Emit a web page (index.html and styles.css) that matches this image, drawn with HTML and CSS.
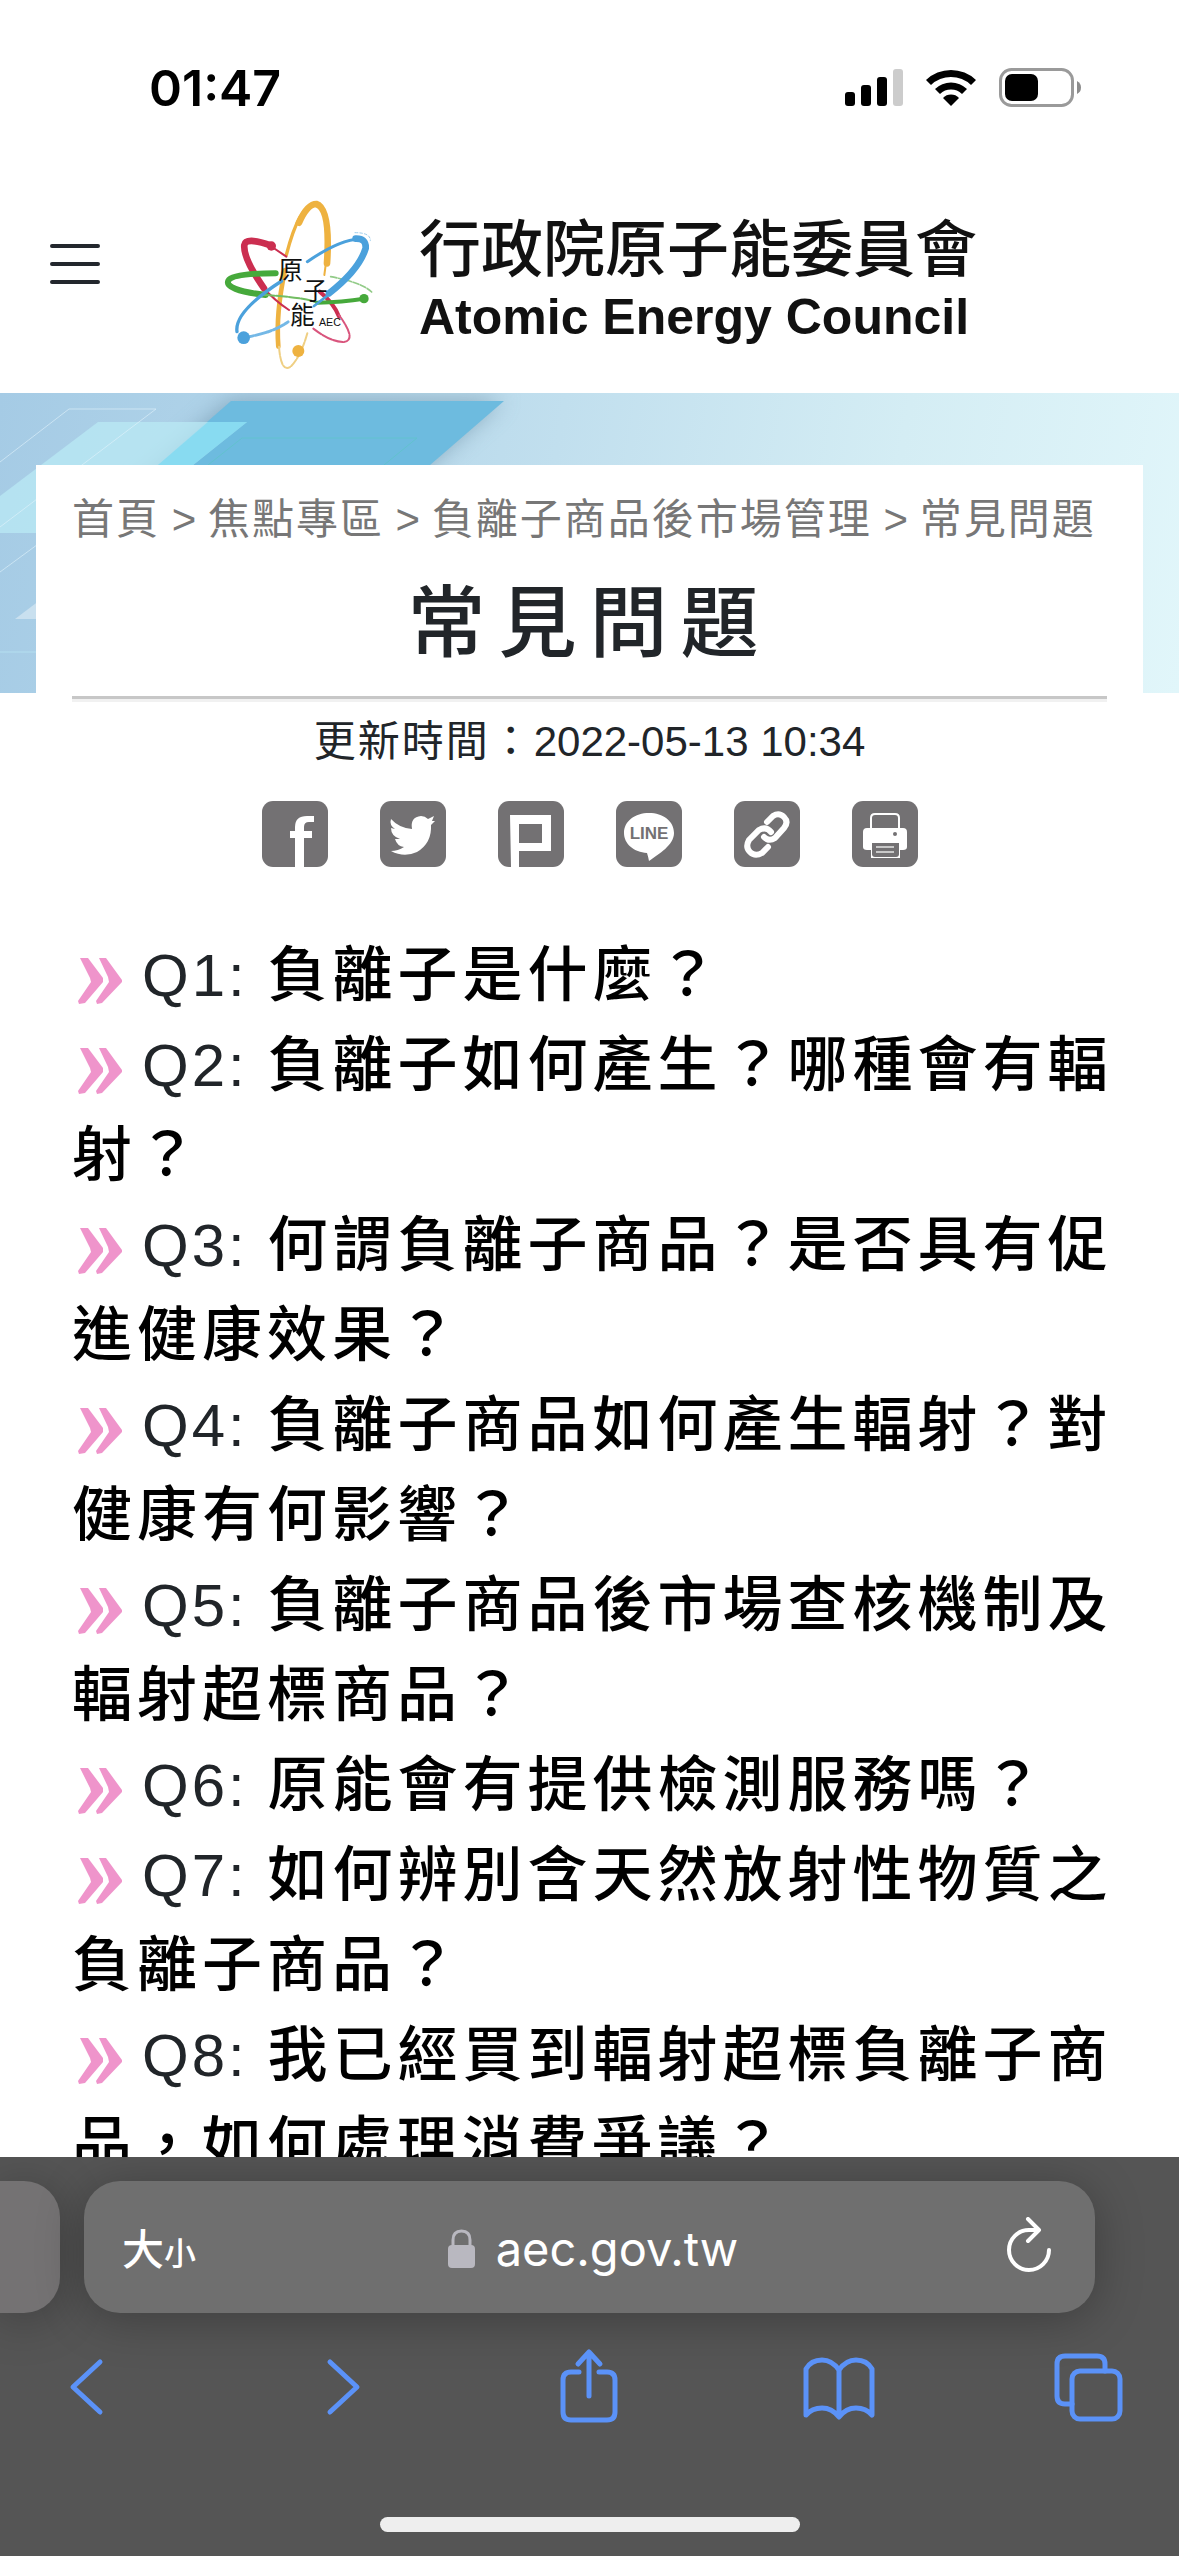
FILE: index.html
```html
<!DOCTYPE html>
<html lang="zh-Hant">
<head>
<meta charset="utf-8">
<meta name="viewport" content="width=device-width, initial-scale=1">
<title>常見問題 - 行政院原子能委員會</title>
<link rel="stylesheet" href="styles.css">
</head>
<body>
<div class="screen">
  <div class="status">
    <time class="status-time">01:47</time>
    <div class="status-icons">
      <svg width="58" height="40" viewBox="0 0 58 40" aria-hidden="true">
        <rect x="0" y="24" width="10" height="14" rx="3"/>
        <rect x="16" y="17" width="10" height="21" rx="3"/>
        <rect x="32" y="9" width="10" height="29" rx="3"/>
        <rect x="48" y="1" width="10" height="37" rx="3" fill="#ccc"/>
      </svg>
      <svg width="52" height="40" viewBox="0 0 52 40" aria-hidden="true">
        <path d="M1 12 A36 36 0 0 1 51 12 L46 17 A29 29 0 0 0 6 17 Z"/>
        <path d="M10 21 A23 23 0 0 1 42 21 L37 26 A16 16 0 0 0 15 26 Z"/>
        <path d="M18 30 A11 11 0 0 1 34 30 L26 38 Z"/>
      </svg>
      <svg width="84" height="40" viewBox="0 0 84 40" aria-hidden="true">
        <rect x="1.500" y="1.500" width="72" height="36" rx="11" fill="none" stroke="#9a9a9a" stroke-width="3"/>
        <rect x="6" y="6" width="33" height="27" rx="7"/>
        <path d="M78 13 Q82 15 82 19.500 Q82 24 78 26 Z" fill="#8c8c8c"/>
      </svg>
    </div>
  </div>

  <header class="site-header">
    <button class="menu" type="button" aria-label="選單">
      <svg width="50" height="42" viewBox="0 0 50 42"><path d="M2 3H48M2 21H48M2 39H48" stroke="#23272d" stroke-width="4" stroke-linecap="round"/></svg>
    </button>
    <a class="brand" href="#">
      <svg class="brand-mark" width="200" height="200" viewBox="0 0 600 600" aria-hidden="true">
        <g fill="none" stroke-linecap="round">
          <path d="M262 225 Q300 75 350 72" stroke="#eeb240" stroke-width="10"/>
          <path d="M300 128 Q325 72 352 72 Q395 85 384 250" stroke="#eeb240" stroke-width="20"/>
          <path d="M382 240 L376 285" stroke="#eeb240" stroke-width="6"/>
          <path d="M258 270 Q230 400 238 500" stroke="#eeb240" stroke-width="14"/>
          <path d="M240 500 Q246 580 275 560 Q305 530 325 460" stroke="#efcf83" stroke-width="6" stroke-dasharray="24 5"/>
          <path d="M215 196 Q140 170 136 195 Q132 235 195 325" stroke="#cb2e50" stroke-width="20"/>
          <path d="M185 315 Q230 365 270 390M215 198L262 230" stroke="#cb2e50" stroke-width="6"/>
          <path d="M362 335 Q405 370 420 410" stroke="#cb2e50" stroke-width="12"/>
          <path d="M420 405 Q475 480 435 486 Q395 486 342 445" stroke="#d9557d" stroke-width="6" stroke-dasharray="30 4"/>
          <path d="M200 345 Q75 330 88 302 Q100 280 230 280" stroke="#46a93b" stroke-width="18"/>
          <path d="M195 345 Q300 350 350 366" stroke="#72bd62" stroke-width="6" stroke-dasharray="32 5"/>
          <path d="M355 368 Q430 366 495 356" stroke="#46a93b" stroke-width="12"/>
          <path d="M395 290 Q490 308 518 336" stroke="#92cb88" stroke-width="5" stroke-dasharray="18 5"/>
          <path d="M325 245 Q420 180 480 177" stroke="#4ba1dc" stroke-width="9"/>
          <path d="M470 176 Q502 175 500 205 Q480 270 390 340" stroke="#4ba1dc" stroke-width="20"/>
          <path d="M390 343 L345 378" stroke="#4ba1dc" stroke-width="8"/>
          <path d="M248 303 Q105 395 114 455" stroke="#4ba1dc" stroke-width="10"/>
          <path d="M150 470 Q230 455 272 422" stroke="#74b8e6" stroke-width="9" stroke-dasharray="12 7 34 4"/>
          <path d="M468 158 Q515 158 514 182" stroke="#9dcdec" stroke-width="3" stroke-dasharray="8 6"/>
        </g>
        <circle cx="217" cy="198" r="14" fill="#cb2e50"/>
        <circle cx="495" cy="356" r="14" fill="#46a93b"/>
        <circle cx="134" cy="473" r="19" fill="#4ba1dc"/>
        <circle cx="298" cy="513" r="18" fill="#eeb240"/>
        <g class="brand-glyphs">
          <text x="238" y="297">原</text><text x="312" y="360">子</text><text x="273" y="432">能</text>
          <text class="brand-abbr" x="360" y="438">AEC</text>
        </g>
      </svg>
      <span class="brand-names">
        <span class="brand-zh">行政院原子能委員會</span>
        <span class="brand-en">Atomic Energy Council</span>
      </span>
    </a>
  </header>

  <main class="page">
    <div class="banner">
      <svg width="560" height="300" viewBox="0 0 560 300" aria-hidden="true">
        <defs>
          <filter id="soft" x="-20%" y="-30%" width="140%" height="160%"><feGaussianBlur stdDeviation="11"/></filter>
        </defs>
        <path d="M231 6H504L400 98H126Z" fill="#5f8299" opacity=".5" filter="url(#soft)"/>
        <path d="M231 8H504L400 98H128Z" fill="#6dbbdf"/>
        <path d="M98 29H247L108 140H0V103Z" fill="#b9eaf4" opacity=".75"/>
        <path d="M208 29H247L193 72H158Z" fill="#74d8f2" opacity=".6"/>
        <path d="M0 69L69 16H156L0 134M0 179L60 135" fill="none" stroke="#e3f3fb" stroke-opacity=".6"/>
        <path d="M208 72L242 45H417L384 72" fill="none" stroke="#62c2cf"/>
        <path d="M15 226L60 192V226Z" fill="#c9e0ef"/>
        <path d="M0 259H60" stroke="#b4dff0"/>
      </svg>
    </div>
    <article class="card">
      <nav class="crumbs" aria-label="麵包屑"><a href="#">首頁</a> &gt; <a href="#">焦點專區</a> &gt; <a href="#">負離子商品後市場管理</a> &gt; <a href="#">常見問題</a></nav>
      <h1 class="title">常見問題</h1>
      <p class="updated"><span class="updated-label">更新時間：</span>2022-05-13 10:34</p>
      <div class="share">
        <a href="#" aria-label="Facebook"><svg viewBox="0 0 66 66"><rect width="66" height="66" rx="11"/><path class="w" d="M33 66V37H28V30H33V26Q33 15 45 15H52V21H47Q42 21 42 26V30H50V37H42V66Z"/></svg></a>
        <a href="#" aria-label="Twitter"><svg viewBox="0 0 66 66"><rect width="66" height="66" rx="11"/><path class="w" d="M11 18Q19 27 32 28Q30 16 41 15Q45 15 48 18L54 15L52 20L55 20L51 24Q52 42 37 51Q24 57 11 50Q18 50 24 46Q17 45 15 38H20Q11 35 11 27L15 28Q9 24 11 18Z"/></svg></a>
        <a href="#" aria-label="Plurk"><svg viewBox="0 0 66 66"><rect width="66" height="66" rx="11"/><path class="w" fill-rule="evenodd" d="M12 14H53V50H21V66H13ZM21 23V42H44V23Z"/></svg></a>
        <a href="#" aria-label="LINE"><svg viewBox="0 0 66 66"><rect width="66" height="66" rx="11"/><path class="w" d="M33 12C47 12 58 20 58 32C58 44 43 53 33 60Q32 55 31 52C18 51 8 43 8 32C8 20 19 12 33 12Z"/><text class="line-text" x="33" y="38" text-anchor="middle">LINE</text></svg></a>
        <a href="#" aria-label="複製連結"><svg viewBox="0 0 66 66"><rect width="66" height="66" rx="11"/><g fill="none" stroke="#fff" stroke-width="6" stroke-linecap="round"><path d="M33 21L39 15Q45 11 50 16Q55 21 50 27L41 37Q35 41 30 36"/><path d="M34 46L28 52Q21 56 16 51Q11 46 15 39L25 29Q32 25 37 31"/></g></svg></a>
        <a href="#" aria-label="列印"><svg viewBox="0 0 66 66"><rect width="66" height="66" rx="11"/><path class="w" d="M15 27H51Q55 27 55 31V46Q55 49 51 49H48V57H19V49H15Q11 49 11 46V31Q11 27 15 27Z"/><path d="M19 27V17Q19 13 23 13H43Q47 13 47 17V27" fill="none" stroke="#fff" stroke-width="2"/><path d="M20 42H47V53Q47 56 44 56H23Q20 56 20 53Z"/><path d="M24 46H42M24 51H42" stroke="#c8c8c8" stroke-width="2"/><circle cx="43" cy="33" r="2"/></svg></a>
      </div>
      <ul class="questions">
        <li><svg class="bullet" viewBox="0 0 70 46"><use href="#chev"/></svg>Q1: <a href="#">負離子是什麼？</a></li>
        <li><svg class="bullet" viewBox="0 0 70 46"><use href="#chev"/></svg>Q2: <a href="#">負離子如何產生？哪種會有輻射？</a></li>
        <li><svg class="bullet" viewBox="0 0 70 46"><use href="#chev"/></svg>Q3: <a href="#">何謂負離子商品？是否具有促進健康效果？</a></li>
        <li><svg class="bullet" viewBox="0 0 70 46"><use href="#chev"/></svg>Q4: <a href="#">負離子商品如何產生輻射？對健康有何影響？</a></li>
        <li><svg class="bullet" viewBox="0 0 70 46"><use href="#chev"/></svg>Q5: <a href="#">負離子商品後市場查核機制及輻射超標商品？</a></li>
        <li><svg class="bullet" viewBox="0 0 70 46"><use href="#chev"/></svg>Q6: <a href="#">原能會有提供檢測服務嗎？</a></li>
        <li><svg class="bullet" viewBox="0 0 70 46"><use href="#chev"/></svg>Q7: <a href="#">如何辨別含天然放射性物質之負離子商品？</a></li>
        <li><svg class="bullet" viewBox="0 0 70 46"><use href="#chev"/></svg>Q8: <a href="#">我已經買到輻射超標負離子商品，如何處理消費爭議？</a></li>
      </ul>
      <svg class="defs" aria-hidden="true"><defs><path id="chev" fill="#ef94cb" d="M8 0H16L31 20V24L13 45L7 46L6 43L19 24L18 20ZM27 0H34L50 22V24L30 45L25 46L24 43L37 24L36 19Z"/></defs></svg>
    </article>
  </main>

  <footer class="browser">
    <div class="tabs">
      <div class="tab-prev"></div>
      <div class="tab">
        <button class="text-size" type="button" aria-label="文字大小"><span>大</span><small>小</small></button>
        <button class="address" type="button">
          <svg width="28" height="40" viewBox="0 0 28 40" aria-hidden="true"><rect x="0" y="16" width="27" height="23" rx="4" fill="#b9b8c0"/><path d="M5 18V11Q5 2 13.500 2Q22 2 22 11V18" fill="none" stroke="#b9b8c0" stroke-width="3"/></svg>
          aec.gov.tw
        </button>
        <button class="reload" type="button" aria-label="重新載入">
          <svg width="46" height="56" viewBox="0 0 46 56"><g fill="none" stroke="#fff" stroke-width="4" stroke-linecap="round" stroke-linejoin="round"><path d="M43 33A20 20 0 1 1 23 13H32"/><path d="M22 2L33 13L22 24"/></g></svg>
        </button>
      </div>
      <div class="tab-gap"></div>
    </div>
    <nav class="tools">
      <button type="button" aria-label="上一頁"><svg viewBox="0 0 80 80"><path d="M51 15L24 40L51 65"/></svg></button>
      <button type="button" aria-label="下一頁"><svg viewBox="0 0 80 80"><path d="M31 15L58 40L31 65"/></svg></button>
      <button type="button" aria-label="分享"><svg viewBox="0 0 80 80"><path d="M30 25H22Q14 25 14 33V65Q14 73 22 73H58Q66 73 66 65V33Q66 25 58 25H50M40 49V6M29 17L40 5L51 17"/></svg></button>
      <button type="button" aria-label="書籤"><svg viewBox="0 0 80 80"><path d="M40 23Q33 13 23 13Q12 13 7 22V68Q13 61 23 61Q33 61 40 70Q47 61 57 61Q67 61 73 68V22Q68 13 57 13Q47 13 40 23V69"/></svg></button>
      <button type="button" aria-label="分頁"><svg viewBox="0 0 80 80"><path d="M56 24V17Q56 9 48 9H16Q8 9 8 17V49Q8 57 16 57H23"/><rect x="23" y="24" width="48" height="48" rx="8"/></svg></button>
    </nav>
    <div class="home-bar"></div>
  </footer>
</div>
</body>
</html>
```
FILE: styles.css
```css
* { box-sizing: border-box; }

body {
  margin: 0;
  background: #fff;
  color: #212529;
  font-family: "Liberation Sans", "Noto Sans CJK TC", sans-serif;
}

a { color: inherit; text-decoration: none; }

button {
  border: 0;
  padding: 0;
  background: none;
  color: inherit;
  font: inherit;
}

svg { display: block; }

.screen {
  height: 100vh;
  display: flex;
  flex-direction: column;
  overflow: hidden;
}

/* status bar */
.status {
  flex: none;
  height: 176px;
  padding: 0 96px 0 149px;
  display: flex;
  align-items: center;
  justify-content: space-between;
  color: #000;
}

.status-time {
  font: 600 50px/60px Inter, sans-serif;
}

.status-icons { display: flex; gap: 22px; }

/* site header */
.site-header {
  flex: none;
  display: flex;
  align-items: flex-start;
  padding: 4px 153px 13px 0;
}

.menu {
  flex: none;
  width: 150px;
  height: 168px;
  padding-left: 50px;
}

.brand {
  flex: 1;
  display: flex;
  justify-content: center;
  gap: 20px;
  color: #111;
}

.brand-mark { flex: none; }

.brand-glyphs {
  font: 400 74px "Noto Sans CJK TC", sans-serif;
  fill: #111;
}

.brand-abbr { font: 32px "Liberation Sans", sans-serif; }

.brand-names {
  display: flex;
  flex-direction: column;
  padding-top: 34px;
  white-space: nowrap;
}

.brand-zh { font-size: 62px; line-height: 74px; font-weight: 500; }
.brand-en { font-size: 50px; line-height: 58px; font-weight: 700; }

/* page */
.page {
  flex: 1;
  min-height: 0;
  position: relative;
  overflow: hidden;
}

.banner {
  position: absolute;
  inset: 0 0 auto;
  height: 300px;
  background: linear-gradient(100deg, #a5cbe5 0%, #b1d4e9 22%, #c1dfee 46%, #d4edf4 74%, #e1f6fa 100%);
}

.card {
  position: relative;
  margin: 72px 36px 0;
  padding: 32px 36px 0;
  background: #fff;
}

.crumbs {
  color: #777;
  font-size: 42px;
  line-height: 46px;
}

.crumbs a { letter-spacing: 2px; }

.title {
  margin: 31px 0 0;
  padding-bottom: 22px;
  border-bottom: 3px solid #c7c7c7;
  box-shadow: 0 3px #f1f1f1;
  font-size: 78px;
  line-height: 100px;
  font-weight: 500;
  letter-spacing: 13px;
  text-align: center;
}

.updated {
  margin: 19px 0 0;
  font-size: 42px;
  line-height: 48px;
  text-align: center;
}

.updated-label { letter-spacing: 2px; }

.share {
  margin-top: 35px;
  display: flex;
  justify-content: center;
  gap: 52px;
}

.share svg { width: 66px; height: 66px; fill: #737173; }
.share .w { fill: #fff; }

.line-text { font: 700 17px "Liberation Sans", sans-serif; }

.questions {
  margin: 64px -12px 0 0;
  padding: 0;
  list-style: none;
  font-size: 60px;
  line-height: 90px;
  letter-spacing: 3px;
}

.questions a {
  color: #000;
  font-weight: 500;
  letter-spacing: 5px;
}

.bullet {
  display: inline-block;
  width: 70px;
  height: 46px;
  vertical-align: -8px;
}

.defs { position: absolute; width: 0; height: 0; }

/* browser chrome */
.browser {
  flex: none;
  position: relative;
  height: 399px;
  padding-top: 24px;
  display: flex;
  flex-direction: column;
  overflow: hidden;
  background: #555;
  color: #fff;
}

.tabs { display: flex; gap: 24px; }

.tab,
.tab-prev {
  height: 132px;
  background: #6f6f6f;
  box-shadow: 0 6px 48px rgba(0, 0, 0, .28);
}

.tab-prev { width: 60px; border-radius: 0 36px 36px 0; background: #747273; }
.tab-gap { width: 60px; }

.tab {
  flex: 1;
  padding: 0 43px 0 38px;
  border-radius: 36px;
  display: grid;
  grid-template-columns: 1fr auto 1fr;
  align-items: center;
}

.text-size {
  justify-self: start;
  display: flex;
  align-items: baseline;
  padding-top: 4px;
  font: 500 42px/60px "Noto Sans CJK TC", sans-serif;
}

.text-size small { font-size: 32px; }

.address {
  display: flex;
  align-items: center;
  gap: 20px;
  padding: 3px 0 0 12px;
  font: 400 47px/60px Inter, sans-serif;
}

.reload { justify-self: end; padding-bottom: 4px; }

.tools {
  display: flex;
  justify-content: space-between;
  padding: 34px 50px 0 49px;
}

.tools svg {
  width: 80px;
  height: 80px;
  fill: none;
  stroke: #5b92f8;
  stroke-width: 5;
  stroke-linecap: round;
  stroke-linejoin: round;
}

.home-bar {
  width: 420px;
  height: 15px;
  margin: auto auto 24px;
  border-radius: 8px;
  background: #eee;
}
```
